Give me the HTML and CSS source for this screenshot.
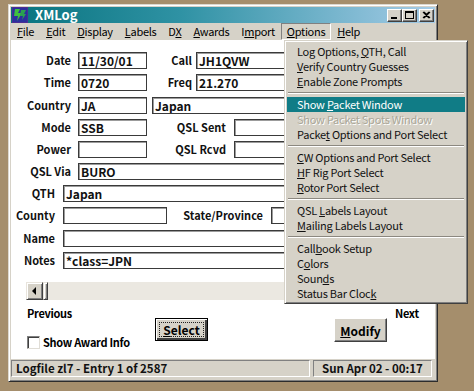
FILE: index.html
```html
<!DOCTYPE html>
<html>
<head>
<meta charset="utf-8">
<link rel="stylesheet" href="styles.css">
</head>
<body>
<div class="window">
  <div class="titlebar">
    <svg class="appicon" width="16" height="16" viewBox="0 0 16 16">
      <rect x="0" y="0" width="16" height="16" fill="#2b2f9e"/>
      <rect x="0" y="0" width="16" height="16" fill="none" stroke="#6a2a8a" stroke-width="1"/>
      <polygon points="3,2 8,2 6,6 10,6 5,14 6,9 2,9" fill="#3fbf3f"/>
      <polygon points="9,3 14,3 12,7 14,7 10,13 11,9 8,9" fill="#2aa050"/>
    </svg>
    <span class="title">XMLog</span>
    <div class="tbbtns">
      <span class="tbbtn"><svg width="13" height="11" viewBox="0 0 13 11"><rect x="3" y="7" width="6" height="2" fill="#000"/></svg></span>
      <span class="tbbtn"><svg width="13" height="11" viewBox="0 0 13 11"><rect x="2.5" y="1.5" width="8" height="7" fill="none" stroke="#000"/><rect x="2" y="1" width="9" height="2" fill="#000"/></svg></span>
      <span class="tbbtn close"><svg width="13" height="11" viewBox="0 0 13 11"><path d="M3 2 L9 8 M4 2 L10 8 M9 2 L3 8 M10 2 L4 8" stroke="#000" stroke-width="1.1"/></svg></span>
    </div>
  </div>

  <div class="menubar">
    <span class="mi"><u>F</u>ile</span>
    <span class="mi"><u>E</u>dit</span>
    <span class="mi"><u>D</u>isplay</span>
    <span class="mi"><u>L</u>abels</span>
    <span class="mi">D<u>X</u></span>
    <span class="mi"><u>A</u>wards</span>
    <span class="mi">I<u>m</u>port</span>
    <span class="mi open"><u>O</u>ptions</span>
    <span class="mi"><u>H</u>elp</span>
  </div>

  <div class="client">
    <div class="rows">
      <div class="row">
        <span class="lbl w60">Date</span><span class="f w69">11/30/01</span>
        <span class="lbl w45">Call</span><span class="f grow">JH1QVW</span>
      </div>
      <div class="row">
        <span class="lbl w60">Time</span><span class="f w69">0720</span>
        <span class="lbl w45">Freq</span><span class="f grow">21.270</span>
      </div>
      <div class="row plus1">
        <span class="lbl w60">Country</span><span class="f w69">JA</span>
        <span class="f grow ml5">Japan</span>
      </div>
      <div class="row">
        <span class="lbl w60">Mode</span><span class="f w69">SSB</span>
        <span class="lbl w79">QSL Sent</span><span class="f grow"></span>
      </div>
      <div class="row">
        <span class="lbl w60">Power</span><span class="f w69"></span>
        <span class="lbl w79">QSL Rcvd</span><span class="f grow"></span>
      </div>
      <div class="row">
        <span class="lbl w60">QSL Via</span><span class="f grow">BURO</span>
      </div>
      <div class="row">
        <span class="lbl w44">QTH</span><span class="f grow">Japan</span>
      </div>
      <div class="row">
        <span class="lbl w44">County</span><span class="f w104"></span>
        <span class="lbl w96">State/Province</span><span class="f grow"></span>
      </div>
      <div class="row plus1">
        <span class="lbl w44">Name</span><span class="f grow"></span>
      </div>
      <div class="row">
        <span class="lbl w44">Notes</span><span class="f grow">*class=JPN</span>
      </div>
    </div>

    <div class="scroll">
      <span class="sbbtn"><svg width="15" height="16" viewBox="0 0 15 16"><polygon points="5,8 9,4 9,12" fill="#000"/></svg></span>
      <span class="thumb"></span>
      <span class="track"></span>
    </div>

    <div class="bottom">
      <div class="leftcol">
        <div class="nav">Previous</div>
        <label class="chk"><span class="box"></span>Show Award Info</label>
      </div>
      <div class="btn default"><span class="focus"><u>S</u>elect</span></div>
      <div class="btn modify"><u>M</u>odify</div>
      <div class="nav next">Next</div>
    </div>
  </div>

  <div class="statusbar">
    <div class="panel p1">Logfile zl7 - Entry 1 of 2587</div>
    <div class="panel p2">Sun Apr 02 - 00:17</div>
  </div>

  <div class="dropdown">
    <div class="it">Log Options, <u>Q</u>TH, Call</div>
    <div class="it"><u>V</u>erify Country Guesses</div>
    <div class="it"><u>E</u>nable Zone Prompts</div>
    <div class="sep"></div>
    <div class="it hl">Show <u>P</u>acket Window</div>
    <div class="it dis">Show Packet Spots Window</div>
    <div class="it">Packe<u>t</u> Options and Port Select</div>
    <div class="sep"></div>
    <div class="it"><u>C</u>W Options and Port Select</div>
    <div class="it"><u>H</u>F Rig Port Select</div>
    <div class="it"><u>R</u>otor Port Select</div>
    <div class="sep"></div>
    <div class="it">QSL <u>L</u>abels Layout</div>
    <div class="it"><u>M</u>ailing Labels Layout</div>
    <div class="sep"></div>
    <div class="it">Call<u>b</u>ook Setup</div>
    <div class="it">C<u>o</u>lors</div>
    <div class="it">Soun<u>d</u>s</div>
    <div class="it">Status Bar Cloc<u>k</u></div>
  </div>
</div>
</body>
</html>
```

FILE: styles.css
```css
html, body {
  margin: 0;
  padding: 0;
}
body {
  width: 474px;
  height: 391px;
  overflow: hidden;
  background: #a58e6c;
  font-family: "Noto Sans CJK JP", "Liberation Sans", sans-serif;
  font-size: 12px;
  color: #000;
  position: relative;
}
u { text-decoration: underline; text-underline-offset: 1px; }

.window {
  position: absolute;
  left: 8px;
  top: 4px;
  width: 430px;
  height: 378px;
  box-sizing: border-box;
  background: #d6d2c8;
  border: 1px solid;
  border-color: #dcd8d0 #2c2c2c #2c2c2c #dcd8d0;
  box-shadow: inset 1px 1px 0 #ffffff, inset -1px -1px 0 #808080;
  padding: 2px;
  display: flex;
  flex-direction: column;
}

/* title bar */
.titlebar {
  height: 16px;
  flex: none;
  display: flex;
  align-items: center;
  padding: 0 1px 0 1px;
  background: linear-gradient(90deg, #08737e 0%, #2f92a4 40%, #a6cce8 100%);
}
.appicon { flex: none; display: block; }
.title {
  margin-left: 7px;
  color: #fff;
  font-weight: bold;
  font-size: 13px;
  line-height: 16px;
}
.tbbtns { margin-left: auto; display: flex; }
.tbbtn {
  width: 15px;
  height: 13px;
  box-sizing: border-box;
  background: #d6d2c8;
  border: 1px solid;
  border-color: #fff #404040 #404040 #fff;
  box-shadow: inset -1px -1px 0 #808080;
  display: flex;
}
.tbbtn svg { display: block; }
.tbbtn.close { margin-left: 2px; }

/* menu bar */
.menubar {
  height: 17px;
  flex: none;
  display: flex;
  align-items: stretch;
  font-size: 11px;
  letter-spacing: -0.3px;
}
.mi {
  padding: 0 6px;
  line-height: 17px;
}
.mi.open {
  padding: 0 5px;
  line-height: 15px;
  border: 1px solid;
  border-color: #808080 #fff #fff #808080;
}

/* client */
.client {
  flex: 1;
  background: #fff;
  display: flex;
  flex-direction: column;
}
.rows {
  padding-top: 12px;
  display: flex;
  flex-direction: column;
  gap: 5px;
}
.row {
  height: 17px;
  display: flex;
  align-items: center;
  padding-right: 148px;
}
.row.plus1 { margin-top: 1px; }
.lbl {
  font-weight: bold;
  font-size: 11px;
  line-height: 17px;
  text-align: right;
  flex: none;
  white-space: nowrap;
  color: #111;
}
.w60 { width: 60px; margin-right: 7px; }
.w44 { width: 44px; margin-right: 8px; }
.w45 { width: 45px; margin-right: 4px; }
.w79 { width: 79px; margin-right: 8px; }
.w96 { width: 96px; margin-right: 8px; }
.f {
  height: 17px;
  box-sizing: border-box;
  border: 1px solid #3a3a3a;
  box-shadow: inset 1px 1px 0 #9c9c9c;
  background: #fff;
  font-weight: bold;
  font-size: 12px;
  line-height: 15px;
  padding-left: 2px;
  white-space: nowrap;
  overflow: hidden;
  color: #111;
}
.f.w69 { width: 69px; flex: none; }
.f.w104 { width: 104px; flex: none; }
.f.grow { flex: 1; }
.ml5 { margin-left: 5px; }

/* scrollbar */
.scroll {
  margin: 13px 148px 0 15px;
  height: 18px;
  display: flex;
  background: #ebe8e1;
}
.sbbtn, .thumb {
  box-sizing: border-box;
  background: #d6d2c8;
  border: 1px solid;
  border-color: #e8e4dc #404040 #404040 #e8e4dc;
  box-shadow: inset 1px 1px 0 #fff, inset -1px -1px 0 #808080;
  flex: none;
}
.sbbtn { width: 17px; height: 18px; display: flex; }
.sbbtn svg { display: block; }
.thumb { width: 5px; height: 18px; }
.track { flex: 1; }

/* bottom */
.bottom {
  display: flex;
  align-items: flex-start;
}
.leftcol {
  margin-left: 16px;
  width: 128px;
  flex: none;
}
.nav {
  margin-top: 6px;
  font-weight: bold;
  font-size: 11px;
  letter-spacing: -0.3px;
  line-height: 14px;
}
.chk {
  margin-top: 15px;
  display: flex;
  align-items: center;
  height: 14px;
  font-weight: bold;
  font-size: 11px;
  letter-spacing: -0.3px;
  line-height: 14px;
}
.chk .box {
  width: 13px;
  height: 13px;
  box-sizing: border-box;
  border: 1px solid;
  border-color: #808080 #e0ddd6 #e0ddd6 #808080;
  box-shadow: inset 1px 1px 0 #404040;
  background: #fff;
  margin-right: 3px;
  flex: none;
}
.btn {
  margin-top: 18px;
  width: 53px;
  height: 24px;
  box-sizing: border-box;
  background: #d6d2c8;
  border: 1px solid;
  border-color: #fff #404040 #404040 #fff;
  box-shadow: inset -1px -1px 0 #808080;
  font-weight: bold;
  font-size: 12px;
  display: flex;
  align-items: center;
  justify-content: center;
  flex: none;
}
.btn.default {
  height: 23px;
  border: 1px solid #000;
  box-shadow: inset 1px 1px 0 #fff, inset -2px -2px 0 #404040, inset -1px -1px 0 #000;
  padding: 3px;
}
.btn .focus {
  flex: 1;
  align-self: stretch;
  border: 1px dotted #222;
  display: flex;
  align-items: center;
  justify-content: center;
  line-height: 13px;
}
.btn.modify { margin-left: 126px; }
.nav.next { margin-left: 8px; }

/* status bar */
.statusbar {
  height: 20px;
  flex: none;
  display: flex;
  padding-top: 1px;
  box-sizing: border-box;
}
.panel {
  height: 17px;
  box-sizing: border-box;
  border: 1px solid;
  border-color: #808080 #fff #fff #808080;
  font-weight: bold;
  font-size: 11.5px;
  line-height: 15px;
  white-space: nowrap;
  color: #111;
}
.p1 { width: 299px; padding-left: 4px; }
.p2 { width: 119px; margin-left: 3px; padding-left: 8px; }

/* dropdown */
.dropdown {
  position: absolute;
  left: 275px;
  top: 35px;
  width: 184px;
  height: 264px;
  box-sizing: border-box;
  background: #d6d2c8;
  border: 1px solid;
  border-color: #d6d2c8 #404040 #404040 #d6d2c8;
  box-shadow: inset 1px 1px 0 #fff, inset -1px -1px 0 #808080;
  padding: 3px 2px 2px 2px;
}
.it {
  height: 15px;
  line-height: 15px;
  padding-left: 10px;
  font-size: 11px;
  letter-spacing: -0.25px;
  white-space: nowrap;
  color: #111;
}
.it.hl {
  background: #107c86;
  color: #fff;
}
.it.dis {
  color: #aaa697;
  text-shadow: 1px 1px 0 #fff;
}
.sep {
  height: 8px;
  position: relative;
}
.sep::before {
  content: "";
  position: absolute;
  left: 1px;
  right: 1px;
  top: 3px;
  height: 1px;
  background: #8c8880;
  border-bottom: 1px solid #fff;
}
```
